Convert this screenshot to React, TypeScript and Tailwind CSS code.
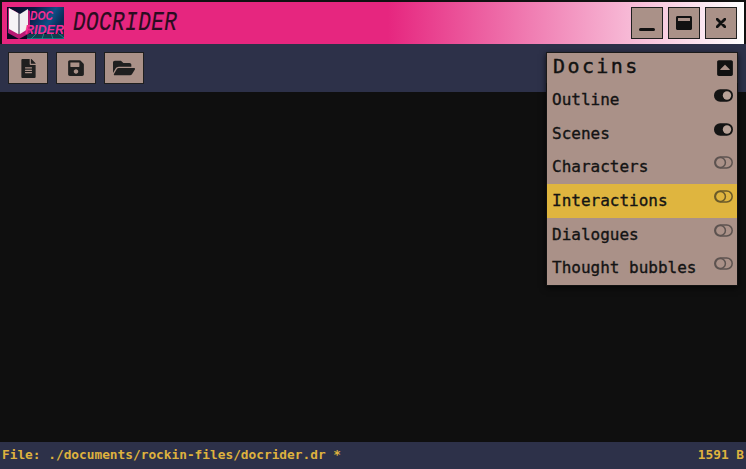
import React from "react";
import { FaFileAlt, FaSave, FaFolderOpen, FaWindowMaximize, FaCaretSquareUp } from "react-icons/fa";

const mono = "font-['DejaVu_Sans_Mono','Liberation_Mono',monospace]";

function Logo() {
  return (
    <svg width="57" height="32" viewBox="0 0 57 32" className="block shrink-0">
      <defs>
        <linearGradient id="sky" x1="0" y1="0" x2="1" y2="0.3">
          <stop offset="0" stopColor="#070a22" />
          <stop offset="0.45" stopColor="#0d1a44" />
          <stop offset="0.8" stopColor="#0f4f86" />
          <stop offset="1" stopColor="#0a2a55" />
        </linearGradient>
      </defs>
      <rect width="57" height="32" fill="url(#sky)" />
      <rect y="26" width="57" height="6" fill="#0a0822" />
      <g stroke="#1fb5b0" strokeWidth="0.7" opacity="0.9">
        <path d="M20 28H57M20 30H57M20 31.5H57" />
        <path d="M30 26L24 32M37 26L35 32M44 26L46 32M51 26L57 31" />
      </g>
      <path d="M1 1L8 4L14 8L21 3L23 4V26L12 32L1 26Z" fill="#b81a74" />
      <path d="M2 1L11 6V27L2 22Z" fill="#f6f4f6" />
      <path d="M13 7L21 2V22L13 27Z" fill="#f1eef1" />
      <path d="M11 6L13 7V27L11 27Z" fill="#8f8f9a" />
      <text x="23" y="13" fontSize="13" fontStyle="italic" fontWeight="700" fill="#f52c92" fontFamily="Liberation Sans" textLength="23" lengthAdjust="spacingAndGlyphs">DOC</text>
      <text x="18" y="27" fontSize="12" fontStyle="italic" fontWeight="700" fill="#f52c92" fontFamily="Liberation Sans" textLength="39" lengthAdjust="spacingAndGlyphs">RIDER</text>
    </svg>
  );
}

function Toggle({ on, tone = "#5d5350" }: { on?: boolean; tone?: string }) {
  return on ? (
    <svg width="19" height="13" viewBox="0 0 19 13" className="block">
      <rect width="19" height="12.5" y="0.2" rx="6.2" fill="#141414" />
      <circle cx="13" cy="6.5" r="4.2" fill="#b7a197" />
    </svg>
  ) : (
    <svg width="19" height="13" viewBox="0 0 19 13" className="block" fill="none" stroke={tone} strokeWidth="1.5">
      <rect x="0.8" y="1" width="17.4" height="11" rx="5.5" />
      <circle cx="6.4" cy="6.5" r="5" />
    </svg>
  );
}

function ToolBtn({ children }: { children: React.ReactNode }) {
  return (
    <button className="w-10 h-8 flex items-center justify-center bg-[#aa9188] border border-[#1f1f1f] text-[#1f1f1f]">
      {children}
    </button>
  );
}

function WinBtn({ children }: { children: React.ReactNode }) {
  return (
    <button className="w-8 h-8 flex items-center justify-center bg-[#aa9188] border border-[#1f1f1f] text-[#111]">
      {children}
    </button>
  );
}

const rows = [
  { label: "Outline", on: true },
  { label: "Scenes", on: true },
  { label: "Characters" },
  { label: "Interactions", active: true },
  { label: "Dialogues" },
  { label: "Thought bubbles" },
];

export default function App() {
  return (
    <div className={`h-[469px] w-[746px] flex flex-col bg-[#0f0f0f] overflow-hidden ${mono}`}>
      <header className="h-11 shrink-0 border-2 border-b-0 border-[#111] bg-[linear-gradient(90deg,#e6267f_0%,#e6267f_52%,#ffffff_100%)] flex items-center pl-[5px] pr-[7px]">
        <Logo />
        <div className="ml-[9px] w-[104px] text-[#2a0c20] text-[27px] leading-none italic font-['Liberation_Mono',monospace] scale-x-[0.78] origin-left whitespace-nowrap tracking-[0.5px] [-webkit-text-stroke:0.2px]">
          DOCRIDER
        </div>
        <div className="ml-auto flex gap-[5px]">
          <WinBtn>
            <span className="block w-4 h-[3px] rounded-full bg-[#111] mt-[12px]" />
          </WinBtn>
          <WinBtn><FaWindowMaximize size={16} /></WinBtn>
          <WinBtn>
            <svg width="10" height="10" viewBox="0 0 10 10" stroke="#111" strokeWidth="2.8" strokeLinecap="round">
              <path d="M1.2 1.2L8.8 8.8M8.8 1.2L1.2 8.8" />
            </svg>
          </WinBtn>
        </div>
      </header>

      <nav className="h-12 shrink-0 bg-[#2d3149] pt-2 px-2 flex gap-2 items-start relative">
        <ToolBtn><FaFileAlt size={19} /></ToolBtn>
        <ToolBtn><FaSave size={18} /></ToolBtn>
        <ToolBtn><FaFolderOpen size={22} /></ToolBtn>

        <div className="absolute right-2 top-2 w-[192px] z-10 shadow-[0_2px_6px_rgba(0,0,0,0.7)]">
          <div className="h-8 bg-[#aa9188] border border-[#1a1a1a] flex items-center justify-between pl-[6px] pr-[3px] text-[#111]">
            <span className="text-[20px] tracking-[2.4px] leading-none -mt-[5px] [-webkit-text-stroke:0.4px]">Docins</span>
            <FaCaretSquareUp size={18} />
          </div>
          <ul className="bg-[#aa9188] border-x border-b border-[#111] -mt-px">
            {rows.map((r) => (
              <li
                key={r.label}
                className={`h-[33.67px] pl-[5px] flex justify-between text-[#141414] ${r.active ? "bg-[#dfb53f]" : ""}`}
              >
                <span className="text-[16px] leading-[33px] [-webkit-text-stroke:0.35px] whitespace-nowrap">{r.label}</span>
                <span className="pt-[6px] pr-[4px]">
                  <Toggle on={r.on} tone={r.active ? "#6a5a2a" : "#5d5350"} />
                </span>
              </li>
            ))}
          </ul>
        </div>
      </nav>

      <main className="flex-1" />

      <footer className="h-[27px] shrink-0 bg-[#2d3149] text-[#deb23e] text-[12.8px] font-bold flex items-center justify-between px-[2px] pb-[2px]">
        <span>File: ./documents/rockin-files/docrider.dr *</span>
        <span>1591 B</span>
      </footer>
    </div>
  );
}
